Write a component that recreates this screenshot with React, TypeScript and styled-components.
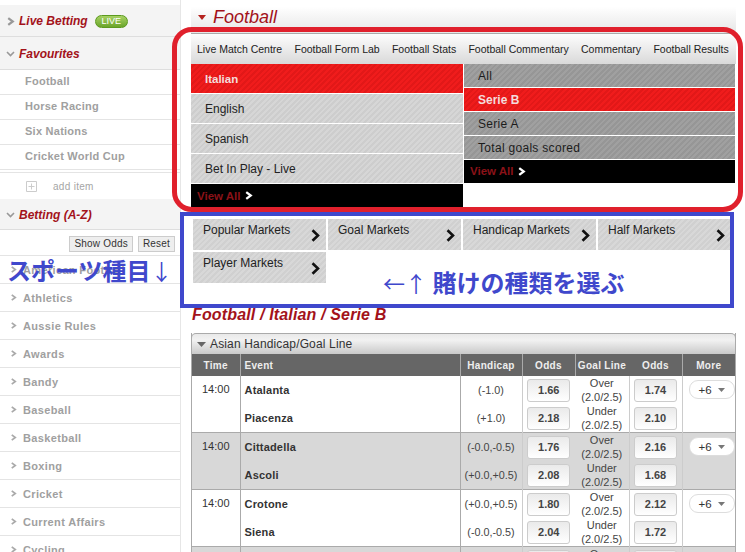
import React from 'react'
import styled, { createGlobalStyle } from 'styled-components'

const favourites = ['Football', 'Horse Racing', 'Six Nations', 'Cricket World Cup']
const sports = [
  'American Football',
  'Athletics',
  'Aussie Rules',
  'Awards',
  'Bandy',
  'Baseball',
  'Basketball',
  'Boxing',
  'Cricket',
  'Current Affairs',
  'Cycling',
]
const tabs = [
  'Live Match Centre',
  'Football Form Lab',
  'Football Stats',
  'Football Commentary',
  'Commentary',
  'Football Results',
]
const leagues = ['Italian', 'English', 'Spanish', 'Bet In Play - Live']
const divisions = ['All', 'Serie B', 'Serie A', 'Total goals scored']
const markets = [
  'Popular Markets',
  'Goal Markets',
  'Handicap Markets',
  'Half Markets',
  'Player Markets',
]

interface Side {
  team: string
  handicap: string
  odds: string
  line: string
  lineOdds: string
}

const fixtures: Side[][] = [
  [
    { team: 'Atalanta', handicap: '(-1.0)', odds: '1.66', line: 'Over', lineOdds: '1.74' },
    { team: 'Piacenza', handicap: '(+1.0)', odds: '2.18', line: 'Under', lineOdds: '2.10' },
  ],
  [
    { team: 'Cittadella', handicap: '(-0.0,-0.5)', odds: '1.76', line: 'Over', lineOdds: '2.16' },
    { team: 'Ascoli', handicap: '(+0.0,+0.5)', odds: '2.08', line: 'Under', lineOdds: '1.68' },
  ],
  [
    { team: 'Crotone', handicap: '(+0.0,+0.5)', odds: '1.80', line: 'Over', lineOdds: '2.12' },
    { team: 'Siena', handicap: '(-0.0,-0.5)', odds: '2.04', line: 'Under', lineOdds: '1.72' },
  ],
  [
    { team: '', handicap: '', odds: '', line: 'Over', lineOdds: '' },
    { team: '', handicap: '', odds: '', line: 'Under', lineOdds: '' },
  ],
]

function Chevron({ size = 8, color = '#999', weight = 2 }: { size?: number; color?: string; weight?: number }) {
  return (
    <svg width={size} height={size} viewBox="0 0 8 8" style={{ flex: 'none' }}>
      <path d="M2 1 L6 4 L2 7" fill="none" stroke={color} strokeWidth={weight} />
    </svg>
  )
}

function DownChevron() {
  return (
    <svg width="9" height="8" viewBox="0 0 9 8" style={{ flex: 'none' }}>
      <path d="M1 2 L4.5 5.5 L8 2" fill="none" stroke="#999" strokeWidth="1.6" />
    </svg>
  )
}

function BigChevron() {
  return (
    <svg width="9" height="13" viewBox="0 0 9 13">
      <path d="M1.5 1.2 L7 6.5 L1.5 11.8" fill="none" stroke="#111" strokeWidth="2.6" />
    </svg>
  )
}

function Caret({ color, w = 10, h = 6 }: { color: string; w?: number; h?: number }) {
  return (
    <svg width={w} height={h} viewBox="0 0 10 6" preserveAspectRatio="none" style={{ flex: 'none' }}>
      <path d="M0 0 H10 L5 6 Z" fill={color} />
    </svg>
  )
}

export default function App() {
  return (
    <Page>
      <GlobalStyle />
      <Sidebar>
        <SectionHead $h={31}>
          <Chevron size={9} />
          <SectionTitle>Live Betting</SectionTitle>
          <LivePill>LIVE</LivePill>
        </SectionHead>
        <SectionHead $h={32}>
          <DownChevron />
          <SectionTitle>Favourites</SectionTitle>
        </SectionHead>
        {favourites.map((f) => (
          <FavRow key={f}>{f}</FavRow>
        ))}
        <AddItem>
          <svg width="11" height="11" viewBox="0 0 11 11">
            <path d="M.5.5h10v10H.5zM5.5 2.5v6M2.5 5.5h6" fill="none" stroke="#ccc" />
          </svg>
          add item
        </AddItem>
        <SectionHead $h={30}>
          <DownChevron />
          <SectionTitle>Betting (A-Z)</SectionTitle>
        </SectionHead>
        <ButtonRow>
          <SmallButton>Show Odds</SmallButton>
          <SmallButton>Reset</SmallButton>
        </ButtonRow>
        {sports.map((s) => (
          <SportRow key={s}>
            <Chevron size={7} color="#aaa" />
            {s}
          </SportRow>
        ))}
      </Sidebar>

      <Main>
        <TitleBar>
          <Caret color="#b5231f" w={8} h={5} />
          <Title>Football</Title>
        </TitleBar>
        <TabBar>
          {tabs.map((t) => (
            <Tab key={t}>{t}</Tab>
          ))}
        </TabBar>
        <Pickers>
          <PickerColumn>
            {leagues.map((l, i) => (
              <LeagueRow key={l} $active={i === 0}>
                {l}
              </LeagueRow>
            ))}
            <ViewAll $tall>
              View All <Chevron size={9} color="#fff" />
            </ViewAll>
          </PickerColumn>
          <PickerColumn>
            {divisions.map((d, i) => (
              <DivisionRow key={d} $active={i === 1}>
                {d}
              </DivisionRow>
            ))}
            <ViewAll>
              View All <Chevron size={9} color="#fff" />
            </ViewAll>
          </PickerColumn>
        </Pickers>

        <MarketGrid>
          {markets.map((m) => (
            <MarketButton key={m}>
              {m}
              <MarketArrow>
                <BigChevron />
              </MarketArrow>
            </MarketButton>
          ))}
        </MarketGrid>

        <Breadcrumb>Football / Italian / Serie B</Breadcrumb>

        <TableCard>
          <TableHead>
            <Caret color="#666" w={9} h={5} />
            Asian Handicap/Goal Line
          </TableHead>
          <OddsTable>
            <colgroup>
              <col style={{ width: 48 }} />
              <col style={{ width: 220 }} />
              <col style={{ width: 62 }} />
              <col style={{ width: 53 }} />
              <col style={{ width: 54 }} />
              <col style={{ width: 53 }} />
              <col />
            </colgroup>
            <thead>
              <tr>
                <HeadCell $center>Time</HeadCell>
                <HeadCell>Event</HeadCell>
                <HeadCell $center>Handicap</HeadCell>
                <HeadCell $center>Odds</HeadCell>
                <HeadCell $center $plain>Goal Line</HeadCell>
                <HeadCell $center>Odds</HeadCell>
                <HeadCell $center>More</HeadCell>
              </tr>
            </thead>
            <tbody>
              {fixtures.map((sides, i) =>
                sides.map((side, j) => (
                  <BodyRow key={`${i}-${j}`} $shade={i % 2 === 1} $last={j === 1}>
                    {j === 0 && <TimeCell rowSpan={2}>{i < 3 ? '14:00' : ''}</TimeCell>}
                    <TeamCell>{side.team}</TeamCell>
                    <HandicapCell>{side.handicap}</HandicapCell>
                    <OddsCell $plain>
                      <OddsButton>{side.odds}</OddsButton>
                    </OddsCell>
                    <LineCell>
                      {side.line}
                      <br />
                      (2.0/2.5)
                    </LineCell>
                    <OddsCell>
                      <OddsButton>{side.lineOdds}</OddsButton>
                    </OddsCell>
                    {j === 0 && (
                      <MoreCell rowSpan={2}>
                        {i < 3 && (
                          <MorePill>
                            +6 <Caret color="#777" w={7} h={4} />
                          </MorePill>
                        )}
                      </MoreCell>
                    )}
                  </BodyRow>
                ))
              )}
            </tbody>
          </OddsTable>
        </TableCard>
      </Main>

      <RedFrame />
      <BlueFrame />
      <SportsNote>
        スポーツ種目<NoteArrows>↓</NoteArrows>
      </SportsNote>
      <MarketsNote>
        <NoteArrows>←↑</NoteArrows> 賭けの種類を選ぶ
      </MarketsNote>
    </Page>
  )
}

const GlobalStyle = createGlobalStyle`
  html, body {
    margin: 0;
    padding: 0;
    background: #fff;
    overflow: hidden;
  }
  body {
    font-family: "Liberation Sans", Arial, sans-serif;
  }
`

const Page = styled.div`
  position: relative;
  display: flex;
  align-items: flex-start;
  width: 745px;
  height: 552px;
  overflow: hidden;
  background: #fff;
`

const Sidebar = styled.div`
  flex: none;
  width: 181px;
  height: 552px;
  padding-top: 5px;
  box-sizing: border-box;
  border-right: 1px solid #e6e6e6;
  overflow: hidden;
`

const SectionHead = styled.div<{ $h: number }>`
  display: flex;
  align-items: center;
  gap: 4px;
  height: ${(p) => p.$h - 1}px;
  padding: 1px 0 0 6px;
  background: #f4f4f4;
  border-bottom: 1px solid #dedede;
`

const SectionTitle = styled.span`
  font-size: 12px;
  font-weight: bold;
  font-style: italic;
  color: #a3121a;
`

const LivePill = styled.span`
  width: 33px;
  height: 13px;
  margin-left: 3px;
  border-radius: 7px;
  border: 1px solid #5c9a1e;
  box-sizing: border-box;
  background: linear-gradient(#a7d264, #6ba52b);
  color: #fff;
  font-size: 9px;
  line-height: 11px;
  text-align: center;
`

const FavRow = styled.div`
  display: flex;
  align-items: center;
  height: 22px;
  padding: 0 0 2px 25px;
  border-bottom: 1px solid #e4e4e4;
  font-size: 11px;
  font-weight: bold;
  letter-spacing: 0.25px;
  color: #a0a0a0;
`

const AddItem = styled.div`
  display: flex;
  align-items: center;
  gap: 16px;
  height: 26px;
  margin-top: 2px;
  padding-left: 26px;
  border-top: 1px solid #e4e4e4;
  font-size: 10px;
  letter-spacing: 0.3px;
  color: #a5a5a5;
`

const ButtonRow = styled.div`
  display: flex;
  justify-content: flex-end;
  align-items: center;
  gap: 5px;
  height: 23px;
  padding: 2px 5px 0 0;
  border-bottom: 1px solid #e4e4e4;
`

const SmallButton = styled.span`
  height: 14px;
  padding: 0 4px;
  background: #eee;
  border: 1px solid #ccc;
  font-size: 10px;
  line-height: 14px;
  letter-spacing: 0.2px;
  color: #333;
`

const SportRow = styled.div`
  display: flex;
  align-items: center;
  gap: 6px;
  height: 27px;
  padding-left: 10px;
  border-bottom: 1px solid #e4e4e4;
  font-size: 11px;
  font-weight: bold;
  letter-spacing: 0.35px;
  color: #a0a0a0;
`

const Main = styled.div`
  flex: none;
  display: flex;
  flex-direction: column;
  width: 545px;
  margin-left: 10px;
`

const TitleBar = styled.div`
  display: flex;
  align-items: center;
  gap: 7px;
  height: 33px;
  padding: 2px 0 0 7px;
  box-sizing: border-box;
  background: linear-gradient(#fff, #fff 20%, #e6e6e6);
`

const Title = styled.span`
  font-size: 18px;
  font-style: italic;
  color: #a3121a;
`

const TabBar = styled.div`
  display: flex;
  align-items: center;
  gap: 12.25px;
  height: 31px;
  padding-left: 6px;
  border-top: 1px solid #aaa;
  box-sizing: border-box;
  background: linear-gradient(#fdfdfd, #d9d9d9);
`

const Tab = styled.span`
  font-size: 10.5px;
  color: #222;
  white-space: nowrap;
`

const Pickers = styled.div`
  display: flex;
  gap: 1px;
  width: 544px;
`

const PickerColumn = styled.div`
  flex: none;
  width: 272px;
  display: flex;
  flex-direction: column;
  &:last-child {
    width: 271px;
  }
`

const stripes = (a: string, b: string) =>
  `repeating-linear-gradient(135deg, ${a} 0, ${a} 2px, ${b} 2px, ${b} 4px)`

const LeagueRow = styled.div<{ $active: boolean }>`
  display: flex;
  align-items: center;
  height: 29px;
  margin-bottom: 1px;
  padding-left: 14px;
  background: ${(p) => (p.$active ? stripes('#f01c1c', '#e21818') : stripes('#d6d6d6', '#cdcdcd'))};
  font-size: ${(p) => (p.$active ? 11.5 : 12)}px;
  font-weight: ${(p) => (p.$active ? 'bold' : 'normal')};
  color: ${(p) => (p.$active ? '#f4dcdc' : '#222')};
`

const DivisionRow = styled.div<{ $active: boolean }>`
  display: flex;
  align-items: center;
  height: 23px;
  margin-bottom: 1px;
  padding-left: 14px;
  background: ${(p) => (p.$active ? stripes('#f01c1c', '#e21818') : stripes('#a0a0a0', '#969696'))};
  font-size: 12px;
  letter-spacing: ${(p) => (p.$active ? 0 : 0.3)}px;
  font-weight: ${(p) => (p.$active ? 'bold' : 'normal')};
  color: ${(p) => (p.$active ? '#f4dcdc' : '#1c1c1c')};
`

const ViewAll = styled.div<{ $tall?: boolean }>`
  display: flex;
  align-items: center;
  gap: 4px;
  height: ${(p) => (p.$tall ? 24 : 23)}px;
  padding: 0 0 1px 6px;
  box-sizing: border-box;
  background: #000;
  font-size: 11.5px;
  font-weight: bold;
  color: #8b1218;
`

const MarketGrid = styled.div`
  display: grid;
  grid-template-columns: repeat(4, 133px);
  grid-auto-rows: 31px;
  gap: 2px;
  margin: 11px 0 0 2px;
  height: 64px;
`

const MarketButton = styled.div`
  position: relative;
  padding: 4px 0 0 10px;
  background: ${stripes('#d8d8d8', '#d0d0d0')};
  font-size: 12px;
  color: #222;
`

const MarketArrow = styled.span`
  position: absolute;
  right: 6px;
  top: 10px;
  display: flex;
`

const Breadcrumb = styled.div`
  margin-top: 22px;
  height: 19px;
  padding-left: 1px;
  font-size: 16px;
  line-height: 19px;
  font-weight: bold;
  font-style: italic;
  letter-spacing: 0.15px;
  color: #a3121a;
`

const TableCard = styled.div`
  margin-top: 9px;
  border-right: 1px solid #aaa;
  border-left: 1px solid #aaa;
`

const TableHead = styled.div`
  display: flex;
  align-items: center;
  gap: 4px;
  height: 21px;
  padding-left: 5px;
  margin: 0 -1px;
  border: 1px solid #aaa;
  border-bottom: none;
  border-radius: 5px 5px 0 0;
  box-sizing: border-box;
  background: linear-gradient(#e9e9e9, #f2f2f2 30%, #c9c9c9);
  font-size: 12px;
  letter-spacing: 0.15px;
  color: #333;
`

const OddsTable = styled.table`
  width: 100%;
  table-layout: fixed;
  border-collapse: collapse;
`

const HeadCell = styled.th<{ $center?: boolean; $plain?: boolean }>`
  height: 22px;
  padding: 0 0 0 ${(p) => (p.$center ? 0 : 4)}px;
  background: #666;
  border-right: 1px solid ${(p) => (p.$plain ? '#666' : '#aaa')};
  font-size: 10px;
  font-weight: bold;
  letter-spacing: 0.3px;
  text-align: ${(p) => (p.$center ? 'center' : 'left')};
  color: #eee;
  &:last-child {
    border-right: none;
  }
`

const BodyRow = styled.tr<{ $shade: boolean; $last: boolean }>`
  height: 28px;
  background: ${(p) => (p.$shade ? '#d8d8d8' : '#fff')};
  border-bottom: ${(p) => (p.$last ? '1px solid #aaa' : 'none')};
`

const TimeCell = styled.td`
  padding: 7px 0 0;
  vertical-align: top;
  text-align: center;
  border-right: 1px solid #aaa;
  font-size: 11px;
  color: #333;
`

const TeamCell = styled.td`
  padding: 0 0 0 4px;
  border-right: 1px solid #aaa;
  font-size: 11px;
  font-weight: bold;
  letter-spacing: 0.2px;
  color: #333;
`

const HandicapCell = styled.td`
  padding: 0;
  border-right: 1px solid #ccc;
  text-align: center;
  font-size: 10.8px;
  white-space: nowrap;
  color: #444;
`

const OddsCell = styled.td<{ $plain?: boolean }>`
  padding: 0;
  border-right: ${(p) => (p.$plain ? 'none' : '1px solid #ccc')};
  text-align: center;
`

const OddsButton = styled.div`
  width: 43px;
  height: 23px;
  margin: 0 auto;
  box-sizing: border-box;
  border: 1px solid #ccc;
  border-radius: 3px;
  background: linear-gradient(#eaeaea, #fff);
  font-size: 11px;
  line-height: 20px;
  font-weight: bold;
  color: #444;
`

const LineCell = styled.td`
  padding: 0;
  border-right: 1px solid #ccc;
  text-align: center;
  font-size: 11px;
  line-height: 14px;
  color: #444;
`

const MoreCell = styled.td`
  padding: 4px 0 0 6px;
  vertical-align: top;
`

const MorePill = styled.div`
  display: flex;
  align-items: center;
  justify-content: center;
  gap: 6px;
  width: 44px;
  height: 17px;
  border: 1px solid #ddd;
  border-radius: 9px;
  background: #fff;
  font-size: 11.5px;
  color: #333;
`

const RedFrame = styled.div`
  position: absolute;
  left: 172px;
  top: 27px;
  width: 571px;
  height: 185px;
  box-sizing: border-box;
  border: 5px solid #e0202c;
  border-radius: 20px;
  pointer-events: none;
`

const BlueFrame = styled.div`
  position: absolute;
  left: 180px;
  top: 212px;
  width: 554px;
  height: 96px;
  box-sizing: border-box;
  border: 4px solid #3f48cc;
  pointer-events: none;
`

const SportsNote = styled.div`
  position: absolute;
  left: 7px;
  top: 255px;
  font-family: "Noto Sans CJK JP", sans-serif;
  font-size: 24px;
  line-height: 30px;
  font-weight: bold;
  color: #3f48cc;
  white-space: nowrap;
`

const MarketsNote = styled.div`
  position: absolute;
  left: 383px;
  top: 267px;
  font-family: "Noto Sans CJK JP", sans-serif;
  font-size: 24px;
  line-height: 30px;
  font-weight: bold;
  color: #3f48cc;
  white-space: nowrap;
`

const NoteArrows = styled.span`
  font-size: 22px;
  font-weight: normal;
`
